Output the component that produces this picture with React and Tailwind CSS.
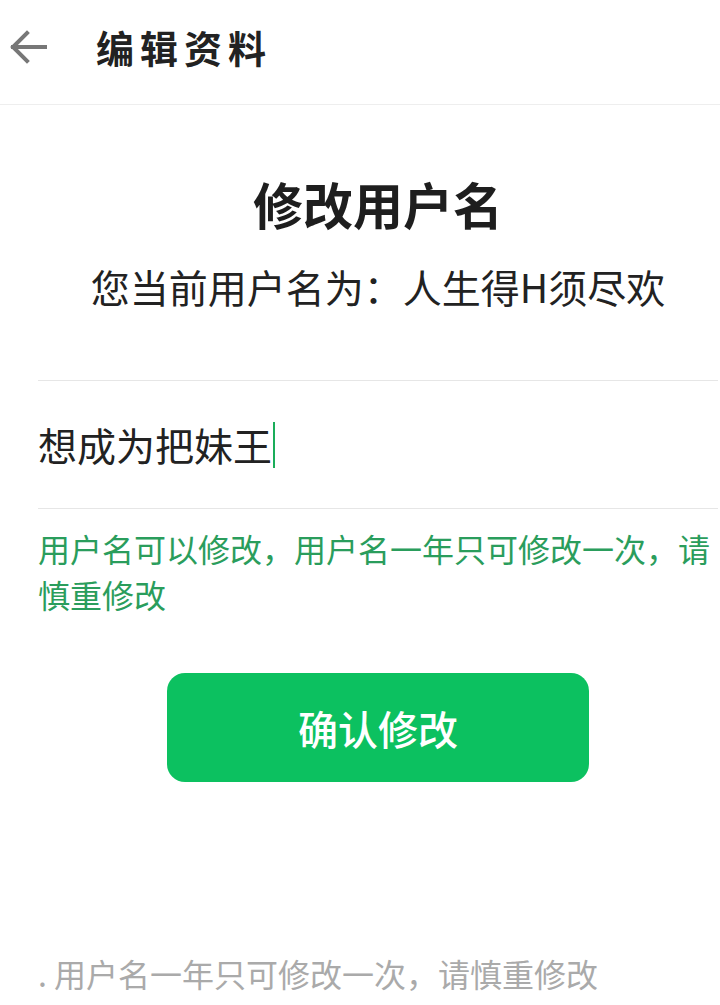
import React from "react";

const font = { fontFamily: '"Noto Sans CJK SC", "Noto Sans", sans-serif' };

function BackArrow() {
  return (
    <svg width="38" height="38" viewBox="0 0 38 38" fill="none" className="shrink-0">
      <path d="M36 19H4M18 5L4 19l14 14" stroke="#777" strokeWidth="4" strokeLinecap="square" />
    </svg>
  );
}

export default function App() {
  return (
    <div className="w-[720px] h-[1005px] bg-white overflow-hidden" style={font}>
      {/* header */}
      <div className="h-[105px] flex items-center border-b border-[#eeeeee]">
        <div className="ml-[9px] mt-[-10px]">
          <BackArrow />
        </div>
        <h1 className="ml-[49px] mt-[-10px] text-[38px] leading-[38px] font-bold tracking-[6px] text-[#222]">
          编辑资料
        </h1>
      </div>

      <div className="pl-[38px] pr-[2px]">
        <h2 className="mt-[73px] text-center text-[50px] leading-[50px] font-bold text-[#1e1e1e]">
          修改用户名
        </h2>
        <p className="mt-[39px] text-center text-[39px] leading-[39px] text-[#222]">
          您当前用户名为：人生得H须尽欢
        </p>

        <div className="mt-[74px] border-t border-[#e6e6e6]" />
        <div className="h-[127px] flex items-center">
          <span className="text-[39px] leading-[39px] text-[#222]">想成为把妹王</span>
          <span className="inline-block w-[2px] h-[46px] bg-[#1aad5a] ml-[1px]" />
        </div>
        <div className="border-t border-[#e6e6e6]" />

        <p className="mt-[16px] text-[32px] leading-[46px] text-[#2a9d5c] whitespace-pre-line">
          {"用户名可以修改，用户名一年只可修改一次，请\n慎重修改"}
        </p>

        <button className="mt-[56px] mx-auto flex items-center justify-center w-[422px] h-[109px] rounded-[18px] bg-[#0cc160] text-white text-[40px] font-medium">
          确认修改
        </button>

        <p className="mt-[175px] text-[32px] leading-[32px] text-[#aaaaaa] whitespace-nowrap">
          . 用户名一年只可修改一次，请慎重修改
        </p>
      </div>
    </div>
  );
}
